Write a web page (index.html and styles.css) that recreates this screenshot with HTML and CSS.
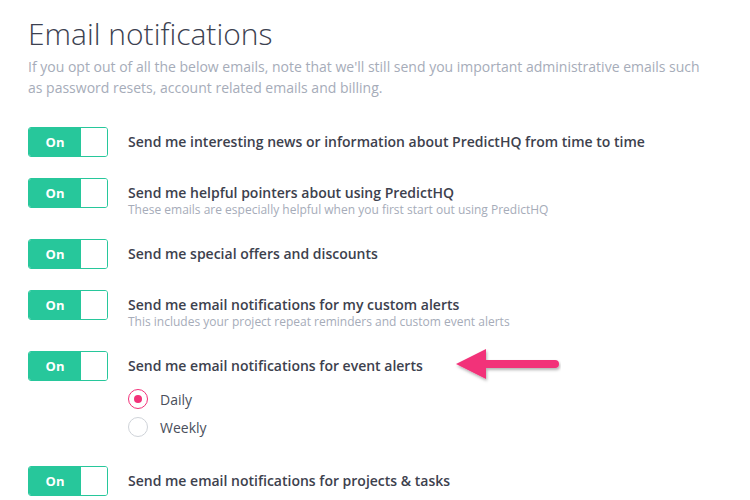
FILE: index.html
```html
<!DOCTYPE html>
<html>
<head>
    <meta charset="UTF-8">
    <title>Email notifications</title>
    <link rel="stylesheet" href="styles.css">
</head>
<body>
    <div class="page">
        <h1>Email notifications</h1>
        <p class="intro">If you opt out of all the below emails, note that we'll still send you important administrative emails such as password resets, account related emails and billing.</p>

        <div class="settings">
            <div class="row">
                <div class="toggle"><span class="toggle-on">On</span><span class="toggle-knob"></span></div>
                <div class="text">
                    <div class="label">Send me interesting news or information about PredictHQ from time to time</div>
                </div>
            </div>

            <div class="row">
                <div class="toggle"><span class="toggle-on">On</span><span class="toggle-knob"></span></div>
                <div class="text">
                    <div class="label">Send me helpful pointers about using PredictHQ</div>
                    <div class="hint">These emails are especially helpful when you first start out using PredictHQ</div>
                </div>
            </div>

            <div class="row">
                <div class="toggle"><span class="toggle-on">On</span><span class="toggle-knob"></span></div>
                <div class="text">
                    <div class="label">Send me special offers and discounts</div>
                </div>
            </div>

            <div class="row">
                <div class="toggle"><span class="toggle-on">On</span><span class="toggle-knob"></span></div>
                <div class="text">
                    <div class="label">Send me email notifications for my custom alerts</div>
                    <div class="hint">This includes your project repeat reminders and custom event alerts</div>
                </div>
            </div>

            <div class="row">
                <div class="toggle"><span class="toggle-on">On</span><span class="toggle-knob"></span></div>
                <div class="text">
                    <div class="label">Send me email notifications for event alerts</div>
                    <div class="radios">
                        <label class="radio"><span class="radio-dot checked"></span>Daily</label>
                        <label class="radio"><span class="radio-dot"></span>Weekly</label>
                    </div>
                </div>
                <!-- annotation arrow -->
                <svg class="arrow" width="110" height="40" viewBox="0 0 110 40">
                    <defs>
                        <filter id="shadow" x="-20%" y="-40%" width="140%" height="180%">
                            <feDropShadow dx="1" dy="2" stdDeviation="1.5" flood-color="#000" flood-opacity="0.3"/>
                        </filter>
                    </defs>
                    <g filter="url(#shadow)" fill="#f23179">
                        <path d="M5 15 L35 0 L35 30 Z"/>
                        <path d="M33 11 L104 11 A4 4 0 0 1 104 19 L33 19 Z"/>
                    </g>
                </svg>
            </div>

            <div class="row">
                <div class="toggle"><span class="toggle-on">On</span><span class="toggle-knob"></span></div>
                <div class="text">
                    <div class="label">Send me email notifications for projects &amp; tasks</div>
                </div>
            </div>
        </div>
    </div>
</body>
</html>
```

FILE: styles.css
```css
body {
    margin: 0;
    font-family: 'Open Sans', sans-serif;
    background: white;
    color: #3d414d;
}
.page {
    padding: 14px 28px 0 28px;
}
h1 {
    margin: 0;
    font-size: 30px;
    font-weight: 300;
    line-height: 40px;
    color: #3c4150;
}
.intro {
    margin: 2px 0 0 0;
    font-size: 14px;
    line-height: 21px;
    color: #a6acb9;
    max-width: 680px;
}
.settings {
    margin-top: 29px;
}
.row {
    position: relative;
    display: flex;
    gap: 20px;
    align-items: flex-start;
    margin-bottom: 21px;
}
.toggle {
    display: flex;
    width: 80px;
    height: 30px;
    box-sizing: border-box;
    border: 1px solid #27c79b;
    border-radius: 3px;
    overflow: hidden;
    flex-shrink: 0;
}
.toggle-on {
    width: 52px;
    background: #27c79b;
    color: white;
    font-size: 13px;
    font-weight: 700;
    line-height: 28px;
    text-align: center;
}
.toggle-knob {
    flex: 1;
    background: white;
}
.label {
    font-size: 14px;
    font-weight: 600;
    line-height: 30px;
    color: #3d414d;
}
.hint {
    margin-top: -6px;
    font-size: 12px;
    line-height: 16px;
    color: #a6acb9;
}
.radios {
    margin: 4px 0 4px 0;
}
.radio {
    display: flex;
    align-items: center;
    gap: 12px;
    height: 28px;
    font-size: 14px;
    color: #4a4f5c;
}
.radio-dot {
    width: 20px;
    height: 20px;
    box-sizing: border-box;
    border: 1px solid #cfd3d9;
    border-radius: 50%;
    display: flex;
    align-items: center;
    justify-content: center;
}
.radio-dot.checked {
    border: 1.5px solid #f23179;
}
.radio-dot.checked::after {
    content: "";
    width: 8px;
    height: 8px;
    border-radius: 50%;
    background: #f23179;
}
.arrow {
    position: absolute;
    left: 423px;
    top: -2px;
}
```
